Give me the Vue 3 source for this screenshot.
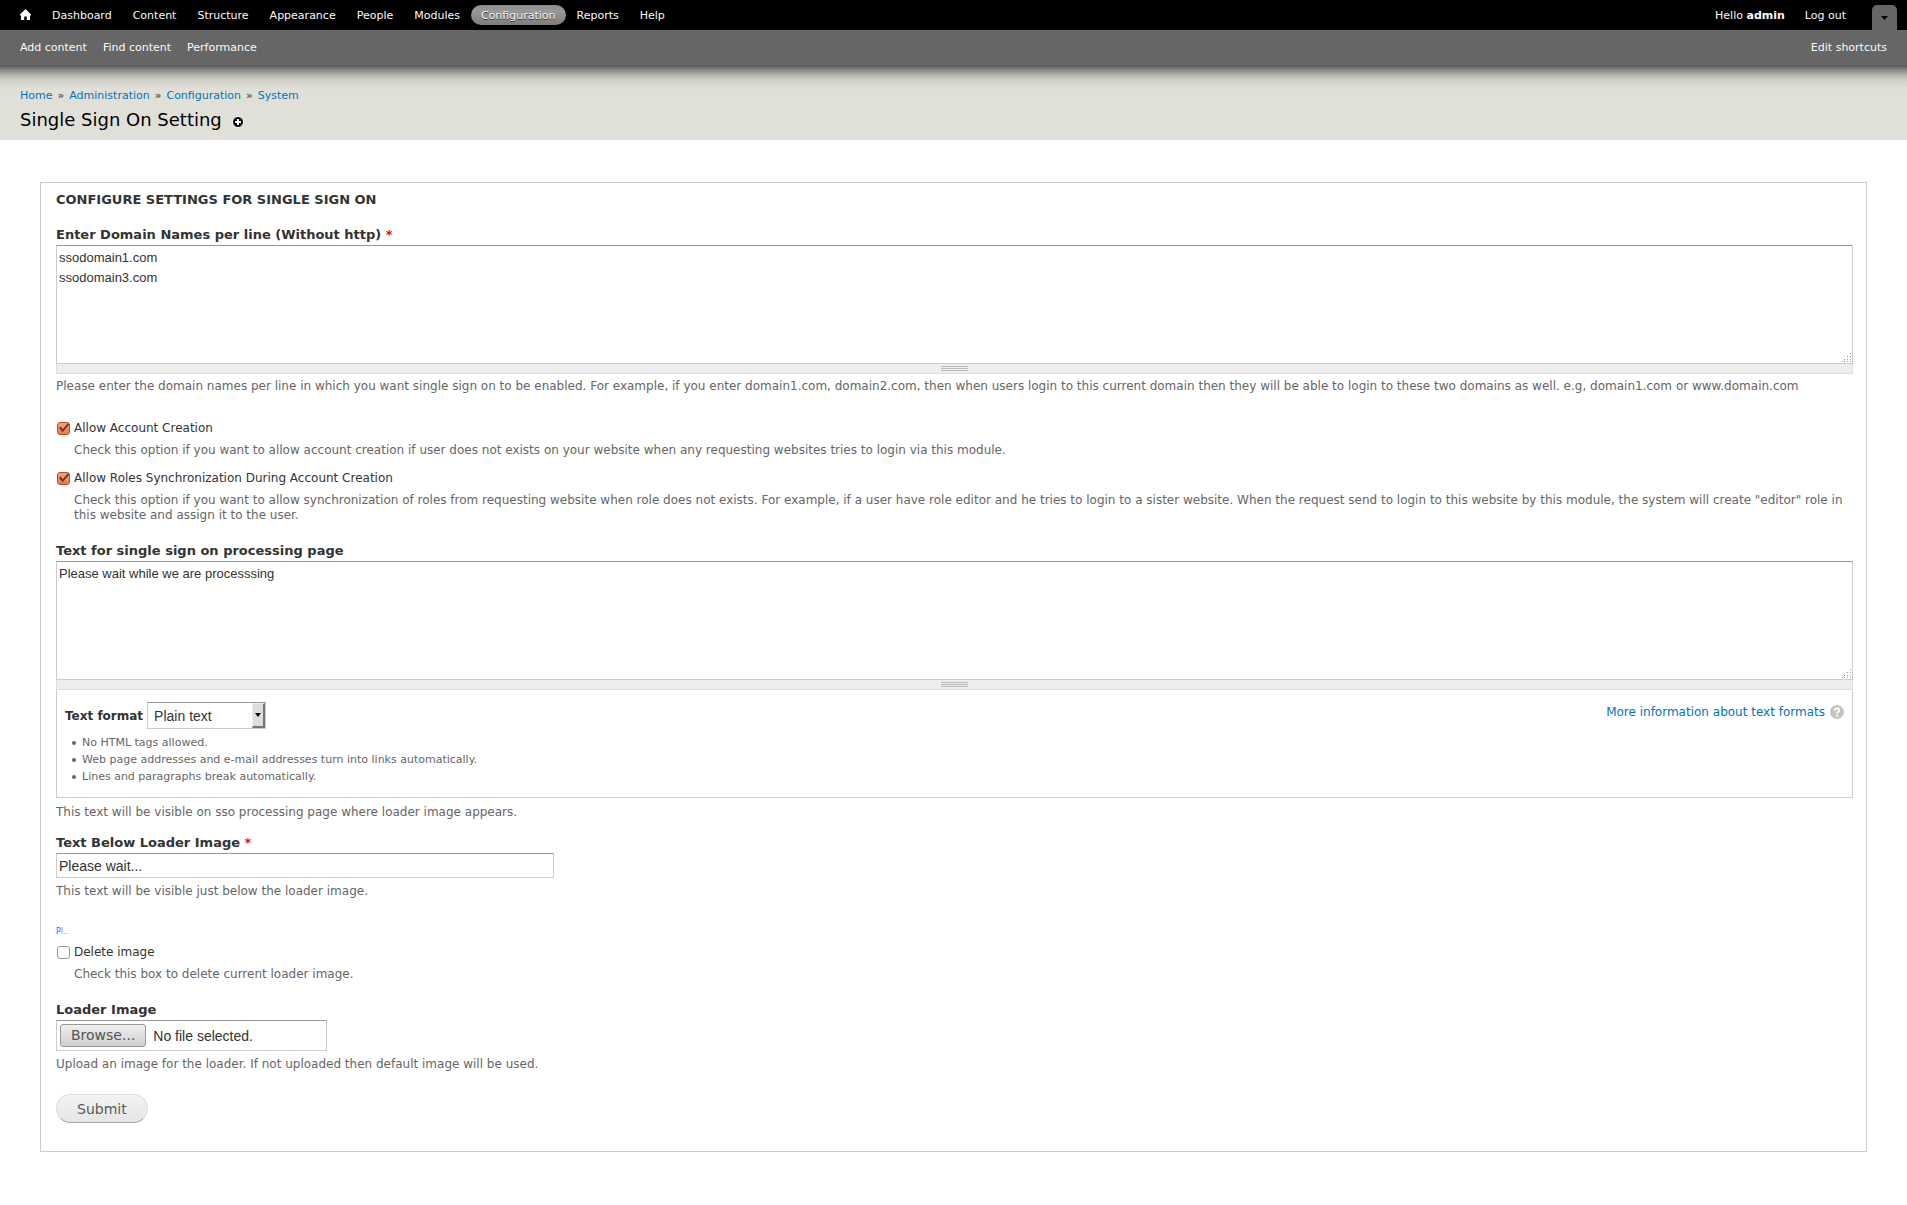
<script setup>
import { ref } from 'vue'

const menu = ['Dashboard', 'Content', 'Structure', 'Appearance', 'People', 'Modules', 'Configuration', 'Reports', 'Help']
const shortcuts = ['Add content', 'Find content', 'Performance']
const crumbs = ['Home', 'Administration', 'Configuration', 'System']
const tips = [
  'No HTML tags allowed.',
  'Web page addresses and e-mail addresses turn into links automatically.',
  'Lines and paragraphs break automatically.',
]

const domains = ref('ssodomain1.com\nssodomain3.com')
const processing = ref('Please wait while we are processsing')
const below = ref('Please wait...')
const allowAccounts = ref(true)
const allowRoles = ref(true)
const deleteImage = ref(false)
</script>

<template>
  <div class="page">
    <header class="toolbar">
      <nav class="toolbar-menu">
        <a class="home" href="#" aria-label="Home">
          <svg width="11" height="11" viewBox="0 0 11 11"><path d="M5.5 0 L0 5.5 V6.5 H1 V11 H4.2 V7.5 H6.8 V11 H10 V6.5 H11 V5.5 Z" fill="#fff" /></svg>
        </a>
        <a v-for="item in menu" :key="item" href="#" :class="{ active: item === 'Configuration' }">{{ item }}</a>
        <div class="user">
          <a href="#">Hello <strong>admin</strong></a>
          <a href="#">Log out</a>
        </div>
        <button class="toggle" type="button" aria-label="Hide shortcuts">
          <svg width="7" height="4" viewBox="0 0 7 4"><path d="M0 0 H7 L3.5 4 Z" fill="#000" /></svg>
        </button>
      </nav>
      <nav class="drawer">
        <a v-for="item in shortcuts" :key="item" href="#">{{ item }}</a>
        <a class="edit" href="#">Edit shortcuts</a>
      </nav>
    </header>

    <div class="branding">
      <nav class="breadcrumb">
        <template v-for="(crumb, i) in crumbs" :key="crumb"><span v-if="i">»</span><a href="#">{{ crumb }}</a></template>
      </nav>
      <div class="title-row">
        <h1>Single Sign On Setting</h1>
        <a href="#" aria-label="Add to shortcuts">
          <svg width="12" height="12" viewBox="0 0 12 12"><circle cx="6" cy="6" r="5.5" fill="#000" stroke="#fff" /><path d="M6 3 V9 M3 6 H9" stroke="#fff" stroke-width="2" /></svg>
        </a>
      </div>
    </div>

    <form class="settings" @submit.prevent>
      <h2>Configure settings for single sign on</h2>

      <div class="item spaced">
        <label class="heading" for="domains">Enter Domain Names per line (Without http) <span class="required">*</span></label>
        <div class="area">
          <textarea id="domains" v-model="domains" spellcheck="false"></textarea>
          <svg class="corner" width="10" height="10" viewBox="0 0 10 10"><path d="M8 0.5h1M8 3.5h1M5 3.5h1M5 6.5h1M8 6.5h1M2 6.5h1M5 8.5h1M2 8.5h1M8 8.5h1M0 8.5h1" stroke="#999" /></svg>
        </div>
        <div class="grippie"><i></i></div>
        <p class="description">Please enter the domain names per line in which you want single sign on to be enabled. For example, if you enter domain1.com, domain2.com, then when users login to this current domain then they will be able to login to these two domains as well. e.g, domain1.com or www.domain.com</p>
      </div>

      <div class="check">
        <input id="accounts" v-model="allowAccounts" type="checkbox">
        <div>
          <label for="accounts">Allow Account Creation</label>
          <p class="description">Check this option if you want to allow account creation if user does not exists on your website when any requesting websites tries to login via this module.</p>
        </div>
      </div>

      <div class="check wide">
        <input id="roles" v-model="allowRoles" type="checkbox">
        <div>
          <label for="roles">Allow Roles Synchronization During Account Creation</label>
          <p class="description">Check this option if you want to allow synchronization of roles from requesting website when role does not exists. For example, if a user have role editor and he tries to login to a sister website. When the request send to login to this website by this module, the system will create "editor" role in this website and assign it to the user.</p>
        </div>
      </div>

      <div class="item">
        <label class="heading" for="processing">Text for single sign on processing page</label>
        <div class="area">
          <textarea id="processing" v-model="processing" spellcheck="false"></textarea>
          <svg class="corner" width="10" height="10" viewBox="0 0 10 10"><path d="M8 0.5h1M8 3.5h1M5 3.5h1M5 6.5h1M8 6.5h1M2 6.5h1M5 8.5h1M2 8.5h1M8 8.5h1M0 8.5h1" stroke="#999" /></svg>
        </div>
        <div class="grippie"><i></i></div>
        <div class="format">
          <div class="format-row">
            <label for="format">Text format</label>
            <span class="select">
              <select id="format"><option>Plain text</option></select>
              <span class="arrow"><svg width="6" height="4" viewBox="0 0 6 4"><path d="M0 0 H6 L3 4 Z" fill="#000" /></svg></span>
            </span>
            <a class="more" href="#">More information about text formats
              <svg width="14" height="14" viewBox="0 0 14 14"><circle cx="7" cy="7" r="7" fill="#c4c4c4" /><path d="M4.8 5.4 C4.8 2.6 9.2 2.6 9.2 5.2 C9.2 6.8 7.2 6.8 7.2 8.6 M7.2 9.8 V11.6" fill="none" stroke="#fff" stroke-width="1.8" /></svg>
            </a>
          </div>
          <ul>
            <li v-for="tip in tips" :key="tip">{{ tip }}</li>
          </ul>
        </div>
        <p class="description">This text will be visible on sso processing page where loader image appears.</p>
      </div>

      <div class="item spaced">
        <label class="heading" for="below">Text Below Loader Image <span class="required">*</span></label>
        <input id="below" v-model="below" class="text" type="text">
        <p class="description">This text will be visible just below the loader image.</p>
      </div>

      <div class="preview">P<span>l..</span></div>

      <div class="check wide">
        <input id="delete" v-model="deleteImage" type="checkbox">
        <div>
          <label for="delete">Delete image</label>
          <p class="description">Check this box to delete current loader image.</p>
        </div>
      </div>

      <div class="item">
        <label class="heading" for="loader">Loader Image</label>
        <div class="file">
          <span class="browse">Browse...</span>
          <span>No file selected.</span>
          <input id="loader" type="file">
        </div>
        <p class="description">Upload an image for the loader. If not uploaded then default image will be used.</p>
      </div>

      <button class="submit" type="submit">Submit</button>
    </form>
  </div>
</template>

<style>
body {
  margin: 0;
  background: #fff;
}
</style>

<style scoped>
.page {
  font: 13px/20px "DejaVu Sans", Verdana, sans-serif;
  color: #333;
}
.page * {
  box-sizing: border-box;
}
a {
  color: #0074bd;
  text-decoration: none;
}
h1, h2, p, ul {
  margin: 0;
}

.toolbar {
  position: relative;
  font-size: 11px;
  background: #666;
}
/* Shadow that the toolbar casts on the page header */
.toolbar::after {
  content: "";
  position: absolute;
  top: 100%;
  left: 0;
  right: 0;
  height: 24px;
  background: linear-gradient(rgba(0, 0, 0, 0.62), rgba(0, 0, 0, 0.4) 20%, rgba(0, 0, 0, 0.18) 44%, rgba(0, 0, 0, 0.06) 68%, rgba(0, 0, 0, 0));
}
.toolbar a {
  color: #fafafa;
}
.toolbar-menu {
  display: flex;
  align-items: center;
  gap: 1px;
  height: 30px;
  padding: 0 10px;
  background: #000;
}
.toolbar-menu a {
  height: 20px;
  padding: 0 10px;
  border-radius: 10px;
  line-height: 22px;
}
.toolbar-menu .home svg {
  display: block;
  margin: 4px 0;
}
.toolbar-menu .active {
  background: linear-gradient(#8a8a8a, #999 30%, #7d7d7d);
  text-shadow: 0 1px 0 #333;
}
.user {
  display: flex;
  margin-left: auto;
}
.toggle {
  align-self: flex-end;
  display: flex;
  align-items: center;
  justify-content: center;
  width: 25px;
  height: 25px;
  margin-left: 15px;
  padding: 0;
  border: 0;
  border-radius: 5px 5px 0 0;
  background: #666;
}
.drawer {
  display: flex;
  gap: 16px;
  padding: 8px 20px 7px;
}
.edit {
  margin-left: auto;
}

.branding {
  padding: 21px 20px 8px;
  background: #e0e0d8;
}
.breadcrumb {
  display: flex;
  gap: 5px;
  font-size: 11px;
}
.title-row {
  display: flex;
  align-items: center;
  gap: 10px;
  padding-top: 2px;
}
.title-row a {
  padding-top: 4px;
}
.title-row svg {
  display: block;
}
h1 {
  color: #000;
  font-size: 18px;
  font-weight: 400;
  line-height: 24px;
}

.settings {
  margin: 42px 40px 40px;
  padding: 7px 13px 28px 15px;
  border: 1px solid #ccc;
}
h2 {
  margin-bottom: 15px;
  font-size: 13px;
  text-transform: uppercase;
}
.heading {
  display: block;
  font-weight: 700;
}
.required {
  color: #f00;
}
.item {
  margin-bottom: 13px;
}
.item.spaced {
  margin-bottom: 24px;
}
.description {
  padding-top: 5px;
  color: #666;
  font-size: 12px;
  line-height: 15px;
}

.area {
  position: relative;
}
textarea {
  display: block;
  width: 100%;
  height: 119px;
  margin: 0;
  padding: 2px;
  border: 1px solid #ccc;
  border-top-color: #999;
  color: #333;
  font: 13px/20px "Liberation Sans", Arial, sans-serif;
  resize: none;
}
.corner {
  position: absolute;
  right: 1px;
  bottom: 1px;
  background: #fff;
}
.grippie {
  display: flex;
  align-items: center;
  justify-content: center;
  height: 10px;
  border: 1px solid #ddd;
  border-top: 0;
  background: #eee;
}
.grippie i {
  width: 27px;
  height: 5px;
  border: solid #bbb;
  border-width: 1px 0;
  background: linear-gradient(#eee 1px, #bbb 1px, #bbb 2px, #eee 2px);
}

.check {
  display: flex;
  gap: 4px;
  margin-bottom: 10px;
}
.check.wide {
  margin-bottom: 18px;
}
.check label {
  display: block;
  font-size: 12px;
}
.check input {
  appearance: none;
  flex: none;
  width: 13px;
  height: 13px;
  margin: 4px 0 0 1px;
  border: 1px solid #999;
  border-radius: 3px;
  background: #fff;
}
.check input:checked {
  border-color: #b4502e;
  background: url("data:image/svg+xml,%3Csvg xmlns='http://www.w3.org/2000/svg' viewBox='0 0 12 12'%3E%3Cpath d='M2 4.5 L5 8.5 L12 0.5' fill='none' stroke='%23583828' stroke-width='2'/%3E%3C/svg%3E") center / 11px, linear-gradient(#f8a080, #f07746);
}

.format {
  margin-bottom: 2px;
  padding: 12px 8px;
  border: 1px solid #ccc;
  border-top: 0;
}
.format-row {
  display: flex;
  align-items: center;
  gap: 4px;
}
.format-row label {
  font-weight: 700;
  font-size: 12px;
}
.select {
  position: relative;
}
select {
  display: block;
  appearance: none;
  width: 119px;
  height: 27px;
  padding: 0 6px;
  border: 1px solid #ccc;
  border-top-color: #999;
  border-radius: 0;
  background: #fff;
  color: #333;
  font: 14px "Liberation Sans", Arial, sans-serif;
}
.arrow {
  position: absolute;
  top: 1px;
  right: 1px;
  bottom: 1px;
  display: flex;
  align-items: center;
  justify-content: center;
  width: 13px;
  border: 1px solid #eee;
  border-right: 2px solid #777;
  border-bottom: 2px solid #777;
  background: #ddd;
  pointer-events: none;
}
.more {
  display: flex;
  align-self: flex-start;
  align-items: center;
  gap: 5px;
  margin-left: auto;
  font-size: 12px;
}
ul {
  padding: 5px 0 0 7px;
  list-style: none;
  color: #666;
  font-size: 11px;
  line-height: 17px;
}
li {
  display: flex;
  align-items: center;
  gap: 6px;
}
li::before {
  content: "";
  width: 4px;
  height: 4px;
  border-radius: 2px;
  background: #666;
}

.text {
  display: block;
  width: 498px;
  height: 25px;
  margin-bottom: 1px;
  padding: 2px;
  border: 1px solid #ccc;
  border-top-color: #999;
  color: #333;
  font: 14px "Liberation Sans", Arial, sans-serif;
}
.preview {
  padding: 5px 0 6px;
  color: #55f;
  font-size: 8px;
  line-height: 8px;
}
.preview span {
  color: #88f;
}
.file {
  position: relative;
  display: flex;
  align-items: center;
  gap: 7px;
  width: 271px;
  height: 31px;
  margin-bottom: 1px;
  padding: 0 3px;
  border: 1px solid #ccc;
  border-top-color: #999;
  font: 14px "Liberation Sans", Arial, sans-serif;
}
.file input {
  position: absolute;
  inset: 0;
  width: 100%;
  opacity: 0;
}
.browse {
  padding: 0 10px;
  border: 1px solid #999;
  border-radius: 3px;
  background: linear-gradient(#eee, #d0d0d0);
  color: #555;
  font: 14px/21px "DejaVu Sans", Verdana, sans-serif;
}
.submit {
  display: block;
  height: 29px;
  margin-top: 22px;
  padding: 0 20px;
  border: 1px solid #ddd;
  border-bottom-color: #aaa;
  border-radius: 15px;
  background: linear-gradient(#f3f3f3, #e6e6e6);
  color: #5a5a5a;
  font: 14px "DejaVu Sans", Verdana, sans-serif;
}
</style>
